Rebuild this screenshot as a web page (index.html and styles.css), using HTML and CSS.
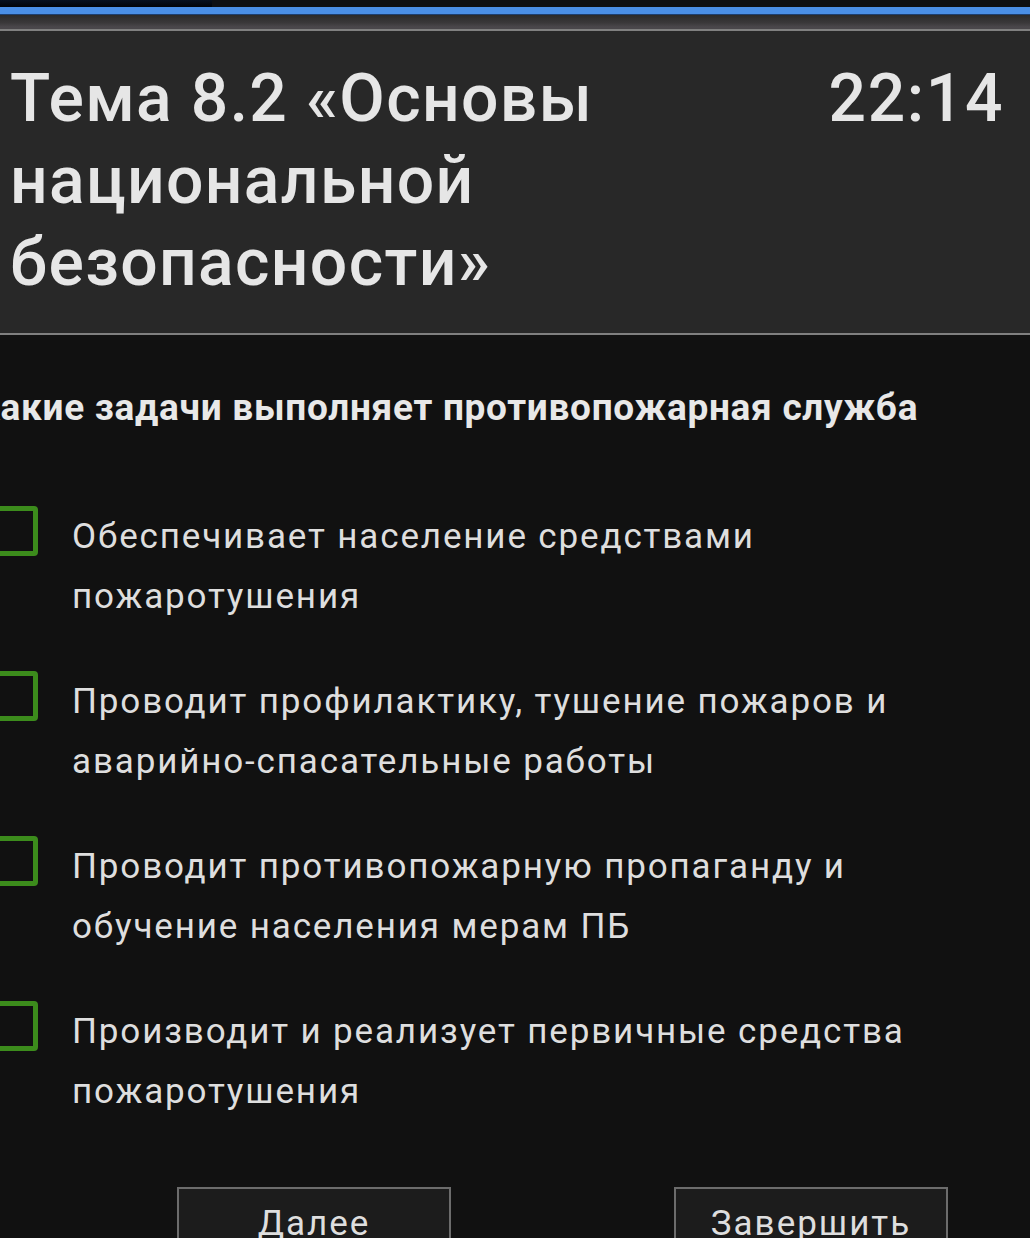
FILE: index.html
```html
<!DOCTYPE html>
<html lang="ru">
<head>
<meta charset="utf-8">
<title>Тема 8.2</title>
<link rel="stylesheet" href="styles.css">
</head>
<body>
<div class="topbar">
  <div class="status"><div class="status-left"></div><div class="status-right"></div></div>
  <div class="progress"></div>
  <div class="shade"></div>
</div>
<header class="header">
  <h1 class="title">Тема 8.2 «Основы национальной безопасности»</h1>
  <div class="clock">22:14</div>
</header>
<main class="main">
  <h2 class="question">Какие задачи выполняет противопожарная служба</h2>
  <ul class="options">
    <li class="option"><span class="check"></span><span class="label">Обеспечивает население средствами пожаротушения</span></li>
    <li class="option"><span class="check"></span><span class="label">Проводит профилактику, тушение пожаров и аварийно-спасательные работы</span></li>
    <li class="option"><span class="check"></span><span class="label">Проводит противопожарную пропаганду и обучение населения мерам ПБ</span></li>
    <li class="option"><span class="check"></span><span class="label">Производит и реализует первичные средства пожаротушения</span></li>
  </ul>
  <div class="buttons">
    <button class="btn">Далее</button>
    <button class="btn">Завершить</button>
  </div>
</main>
</body>
</html>
```
FILE: styles.css
```css
* { box-sizing: border-box; }
html, body { margin: 0; padding: 0; }
body {
  background: #111111;
  font-family: Roboto, "Liberation Sans", sans-serif;
  width: 1030px;
  height: 1238px;
  overflow: hidden;
}
.topbar { display: flex; flex-direction: column; }
.status { display: flex; height: 7px; }
.status-left { width: 212px; background: linear-gradient(180deg, #07101e, #020306); }
.status-right { flex: 1; background: #0e1013; }
.progress { height: 8px; background: #4a8fe6; box-shadow: inset 0 -1px 0 #1d3f6f; }
.shade {
  height: 16px;
  background: linear-gradient(180deg, #2a2a2a 0%, #3a383a 55%, #4a474b 85%, #4a474b 86%);
  border-bottom: 2px solid #808080;
}
.header {
  display: flex;
  justify-content: space-between;
  align-items: flex-start;
  background: #282828;
  border-bottom: 2px solid #808080;
  padding: 27px 26px 28px 10px;
  height: 304px;
}
.title {
  margin: 0;
  max-width: 780px;
  font-size: 66px;
  line-height: 82px;
  font-weight: 500;
  color: #e6e6e6;
  letter-spacing: 1.35px;
}
.clock {
  font-size: 66px;
  line-height: 82px;
  font-weight: 500;
  color: #e6e6e6;
  letter-spacing: 1.6px;
}
.main {
  margin-left: -24px;
  padding-top: 48px;
}
.question {
  margin: 0;
  font-size: 37px;
  line-height: 50px;
  font-weight: 700;
  color: #e8e8e8;
  letter-spacing: 0.7px;
}
.options {
  list-style: none;
  margin: 74px 0 0 0;
  padding: 0;
}
.option {
  display: flex;
  align-items: flex-start;
  margin-bottom: 45px;
}
.check {
  flex: none;
  width: 50px;
  height: 50px;
  margin-left: 12px;
  margin-top: -1px;
  border: 5px solid #3c8c1c;
  border-radius: 4px;
  background: #111111;
}
.label {
  margin-left: 34px;
  font-size: 35px;
  line-height: 60px;
  color: #dedede;
  letter-spacing: 1.85px;
  max-width: 900px;
}
.buttons {
  display: flex;
  gap: 223px;
  padding-left: 201px;
  margin-top: 65px;
}
.btn {
  width: 274px;
  height: 90px;
  background: #1c1c1c;
  border: 2px solid #6c6c6c;
  color: #dedede;
  font-family: Roboto, "Liberation Sans", sans-serif;
  font-size: 35px;
  letter-spacing: 2px;
  padding: 14px 0 0 0;
  display: flex;
  justify-content: center;
  align-items: flex-start;
}
```
